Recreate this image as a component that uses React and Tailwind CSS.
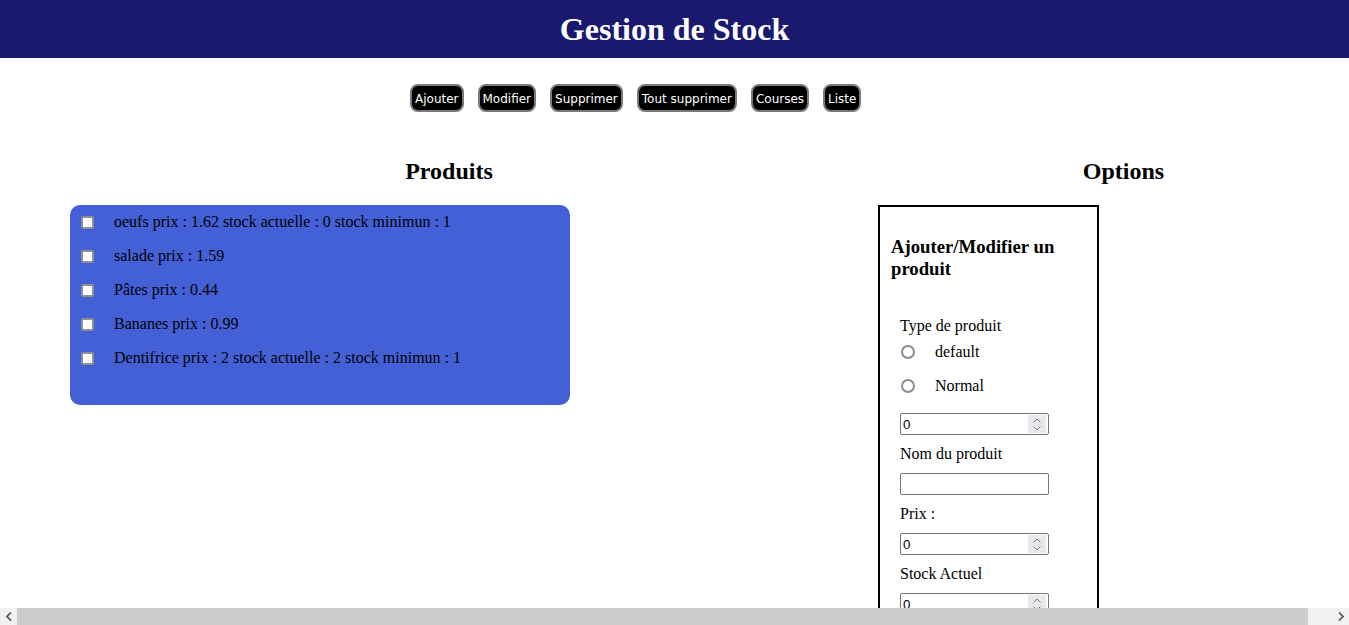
import React from "react";

const serif = "font-['Liberation_Serif','Times_New_Roman',serif]";

function NumberInput() {
  return (
    <div className="relative w-[149px] h-[22px]">
      <input
        type="text"
        defaultValue="0"
        className="block w-[149px] h-[22px] border border-[#767676] rounded-[2px] bg-white px-[2px] text-[13.33px] text-black font-['Liberation_Sans',Arial,sans-serif]"
      />
      <div className="absolute right-[3px] top-[2px] w-[18px] h-[18px] bg-[#e9e9ed] flex flex-col items-center justify-center gap-[3px]">
        <svg width="8" height="5" viewBox="0 0 8 5"><path d="M0.5 4.5 L4 1 L7.5 4.5" fill="none" stroke="#7a7a7a" strokeWidth="1" /></svg>
        <svg width="8" height="5" viewBox="0 0 8 5"><path d="M0.5 0.5 L4 4 L7.5 0.5" fill="none" stroke="#7a7a7a" strokeWidth="1" /></svg>
      </div>
    </div>
  );
}

function Radio() {
  return (
    <span className="ml-[1px] w-[14px] h-[14px] rounded-full border-2 border-[#8a8a96] bg-white shrink-0" />
  );
}

export default function App() {
  const buttons = ["Ajouter", "Modifier", "Supprimer", "Tout supprimer", "Courses", "Liste"];
  const items = [
    "oeufs prix : 1.62 stock actuelle : 0 stock minimun : 1",
    "salade prix : 1.59",
    "Pâtes prix : 0.44",
    "Bananes prix : 0.99",
    "Dentifrice prix : 2 stock actuelle : 2 stock minimun : 1",
  ];
  return (
    <div className={`relative w-[1349px] h-[625px] overflow-hidden bg-white text-black ${serif}`}>
      <header className="h-[58px] w-[1349px] bg-[#191970] flex items-center justify-center">
        <h1 className="text-[32px] font-bold text-white leading-none">Gestion de Stock</h1>
      </header>

      <div className="w-[1374px]">
        <nav className="flex gap-[14px] pl-[410px] pt-[26px]">
          {buttons.map((b) => (
            <button
              key={b}
              className="h-[28px] px-[3px] pt-[1px] bg-black text-white text-[12px] border-2 border-[#7a7a7a] rounded-[8px] font-['DejaVu_Sans',Verdana,sans-serif] leading-none"
            >
              {b}
            </button>
          ))}
        </nav>

        <div className="flex pt-[47px]">
          <section className="w-[878px] shrink-0">
            <h2 className="pl-[20px] text-center text-[24px] font-bold leading-[24px] h-[24px]">Produits</h2>
            <div className="ml-[70px] mt-[22px] w-[500px] rounded-[10px] bg-[#4460d6] pb-[30px]">
              {items.map((t) => (
                <div key={t} className="h-[34px] flex items-center">
                  <span className="ml-[11px] w-[13px] h-[13px] rounded-[2px] border-2 border-[#8f8f8f] bg-white shrink-0" />
                  <span className="ml-[20px] text-[16px]">{t}</span>
                </div>
              ))}
            </div>
          </section>

          <section className="w-[491px] shrink-0">
            <h2 className="text-center text-[24px] font-bold leading-[24px] h-[24px]">Options</h2>
            <div className="mt-[22px] w-[221px] h-[450px] border-2 border-black pl-[11px] pr-[8px] pt-[29px]">
              <h3 className="text-[18.72px] font-bold leading-[22px]">Ajouter/Modifier un produit</h3>
              <div className="pl-[9px] mt-[37px] text-[16px]">
                <div className="h-[18px] leading-[18px]">Type de produit</div>
                <div className="h-[34px] flex items-center">
                  <Radio />
                  <span className="ml-[20px] leading-[18px]">default</span>
                </div>
                <div className="h-[34px] flex items-center">
                  <Radio />
                  <span className="ml-[20px] leading-[18px]">Normal</span>
                </div>
                <div className="mt-[10px]">
                  <NumberInput />
                </div>
                <div className="mt-[10px] h-[18px] leading-[18px]">Nom du produit</div>
                <input
                  type="text"
                  className="mt-[10px] block w-[149px] h-[22px] border border-[#767676] rounded-[2px] bg-white px-[2px] text-[13.33px] font-['Liberation_Sans',Arial,sans-serif]"
                />
                <div className="mt-[10px] h-[18px] leading-[18px]">Prix :</div>
                <div className="mt-[10px]">
                  <NumberInput />
                </div>
                <div className="mt-[10px] h-[18px] leading-[18px]">Stock Actuel</div>
                <div className="mt-[10px]">
                  <NumberInput />
                </div>
              </div>
            </div>
          </section>
        </div>
      </div>

      {/* horizontal scrollbar */}
      <div className="absolute bottom-0 left-0 w-[1349px] h-[17px] bg-[#f1f1f1] flex items-center">
        <div className="w-[17px] h-[17px] flex items-center justify-center">
          <svg width="6" height="9" viewBox="0 0 6 9"><path d="M5 0.5 L1 4.5 L5 8.5" fill="none" stroke="#505050" strokeWidth="1.6" /></svg>
        </div>
        <div className="w-[1291px] h-[17px] bg-[#cdcdcd]" />
        <div className="flex-1" />
        <div className="w-[17px] h-[17px] flex items-center justify-center">
          <svg width="6" height="9" viewBox="0 0 6 9"><path d="M1 0.5 L5 4.5 L1 8.5" fill="none" stroke="#505050" strokeWidth="1.6" /></svg>
        </div>
      </div>
    </div>
  );
}
